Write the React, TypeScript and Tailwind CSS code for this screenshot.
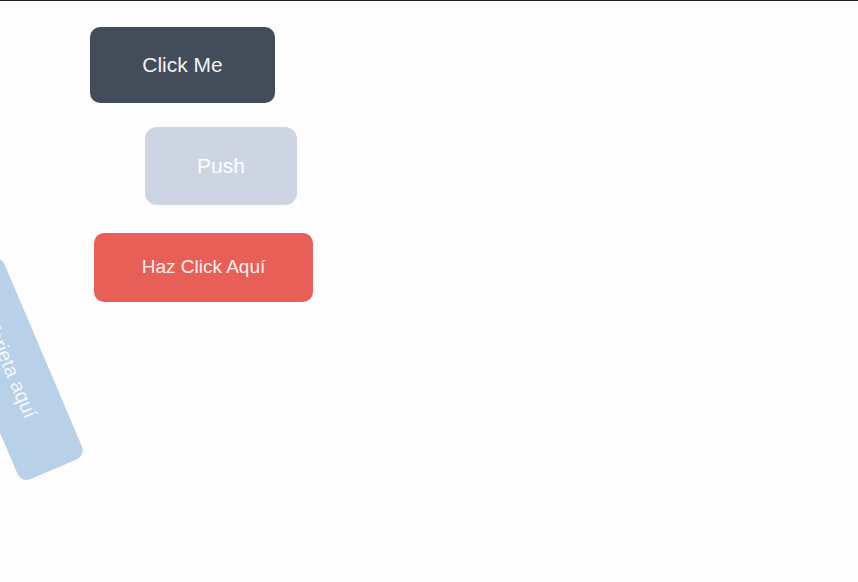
const font = { fontFamily: '"Liberation Sans", Arial, sans-serif' };

export default function App() {
  return (
    <div
      className="relative h-[582px] w-full overflow-hidden border-t border-[#1e1e1e] bg-[#fdfdfd]"
      style={font}
    >
      <div className="flex flex-col items-start">
        <button className="ml-[90px] mt-[26px] flex h-[76px] w-[185px] items-center justify-center rounded-[10px] bg-[#434d5a] text-[21px] text-[#f2f3f5]">
          Click Me
        </button>
        <button className="ml-[145px] mt-[24px] flex h-[78px] w-[152px] items-center justify-center rounded-[12px] bg-[#cdd5e2] text-[21px] text-white">
          Push
        </button>
        <button className="ml-[94px] mt-[28px] flex h-[69px] w-[219px] items-center justify-center rounded-[10px] bg-[#e85f57] text-[19px] text-[#fdf1f0]">
          Haz Click Aquí
        </button>
        <button className="ml-[-98px] mt-[32px] flex h-[70px] w-[218px] rotate-[67deg] items-center justify-center rounded-[10px] bg-[#b8d0e8] text-[20px] text-[#f4f8fc]">
          Tarjeta aquí
        </button>
      </div>
    </div>
  );
}
